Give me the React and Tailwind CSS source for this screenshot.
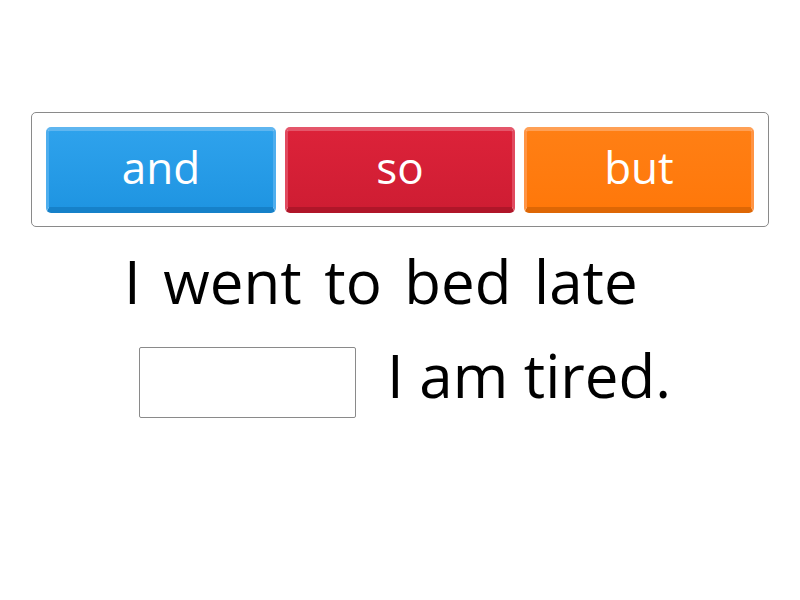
const WORDS = [
  {
    text: 'and',
    cls: 'bg-gradient-to-b from-[#2ea2ec] to-[#1f95e2] border-t-[#5fb6f0] border-x-[#4eaeee] border-b-[#1681c9]',
  },
  {
    text: 'so',
    cls: 'bg-gradient-to-b from-[#dc2239] to-[#cf1d33] border-t-[#e4566a] border-x-[#e14a5f] border-b-[#b01629]',
  },
  {
    text: 'but',
    cls: 'bg-gradient-to-b from-[#ff7f14] to-[#ff780a] border-t-[#ffa055] border-x-[#ff9444] border-b-[#de6705]',
  },
]

export default function App() {
  return (
    <div className="w-[800px] h-[600px] bg-white font-['Open_Sans','Lato',sans-serif] text-black [font-variant-ligatures:none]">
      <div className="pt-[112px] px-[31px]">
        {/* Word bank */}
        <div className="border border-[#8a8a8a] rounded-[5px] h-[115px] px-[14px] pt-[14px] flex gap-[9px]">
          {WORDS.map((w) => (
            <div
              key={w.text}
              className={`w-[231px] h-[86px] rounded-[5px] border-t-[4px] border-x-[3px] border-b-[6px] flex items-center justify-center text-white text-[44px] leading-none pb-[4px] ${w.cls}`}
            >
              {w.text}
            </div>
          ))}
        </div>
      </div>

      {/* Sentence */}
      <div className="pl-[124px] pt-[24px] text-[60px] leading-none [word-spacing:7px]">I went to bed late</div>
      <div className="flex items-start pl-[139px] pt-[36px]">
        <div className="w-[217px] h-[71px] border border-[#8a8a8a] rounded-[2px]" />
        <div className="ml-[31px] -mt-[2px] text-[60px] leading-none">I am tired.</div>
      </div>
    </div>
  )
}
